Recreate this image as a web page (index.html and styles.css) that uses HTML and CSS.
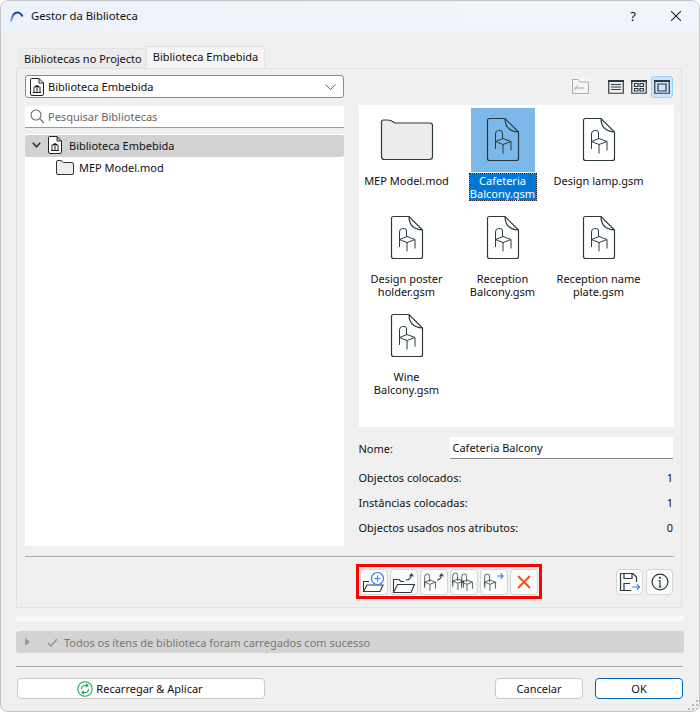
FILE: index.html
```html
<!DOCTYPE html>
<html lang="pt">
<head>
    <meta charset="UTF-8">
    <meta name="viewport" content="width=device-width, initial-scale=1.0">
    <title>Gestor da Biblioteca</title>
    <link rel="stylesheet" href="styles.css">
</head>
<body>
    <svg class="defs" width="0" height="0">
        <defs>
            <linearGradient id="arc" x1="0" y1="1" x2="1" y2="0">
                <stop offset="0" stop-color="#8fb0f0"/>
                <stop offset=".6" stop-color="#1f3fa8"/>
                <stop offset="1" stop-color="#2a4fc0"/>
            </linearGradient>
        </defs>
        <symbol id="chair" viewBox="0 0 20 26">
            <path d="M1 21V5.500Q1 1 4 1H5.500Q8 1 8 4V12M1 12.500L8.500 9.500L16.500 12.500L8.500 15.500ZM8.500 15.500V25M16.500 12.500V22M1 12.500V18" fill="none" stroke="currentColor" stroke-width="1.100"/>
        </symbol>
        <symbol id="doc" viewBox="0 0 64 64">
            <path d="M18.500 10.500H34L47.500 24V50.500Q47.500 52.500 45.500 52.500H18.500Q16.500 52.500 16.500 50.500V12.500Q16.500 10.500 18.500 10.500ZM34 10.500Q34 23 47.500 24" fill="none" stroke="#2b3a42" stroke-width="1.200"/>
            <path d="M24.500 41V26Q24.500 22.500 27.500 22.500H29Q31.500 22.500 31.500 25V31M24.500 33.500L32 30.500L40 33.500L32 36.500ZM32 36.500V45.500M40 33.500V42.500" fill="none" stroke="#2b3a42" stroke-width="1"/>
        </symbol>
        <symbol id="libdoc" viewBox="0 0 14 18">
            <path d="M1.500 .500H9L13.500 5V16Q13.500 17.500 12 17.500H2Q.500 17.500 .500 16V2Q.500 .500 1.500 .500ZM9 .500V5H13.500" fill="#fff" stroke="#222" stroke-width="1"/>
            <path d="M2.500 9.500L7 7L11.500 9.500Z" fill="#222"/>
            <path d="M4 10V14M7 10V14M10 10V14M3 14.500H11" fill="none" stroke="#222" stroke-width="1"/>
        </symbol>
        <symbol id="openfolder" viewBox="0 0 24 20">
            <path d="M1.500 18.500V5.500H7L9 7.500H12M1.500 18.500L5.500 10.500H22.500L19 18.500Z" fill="none" stroke="#2b3a42" stroke-width="1.100"/>
        </symbol>
    </svg>

    <div class="window">
        <header class="titlebar">
            <svg class="app-logo" width="16" height="13" viewBox="0 0 16 13"><path d="M2 11.500Q3.500 3 8 2.500Q11.500 2.300 13.500 6.500" fill="none" stroke="url(#arc)" stroke-width="2"/></svg>
            <span class="title">Gestor da Biblioteca</span>
            <span class="title-help">?</span>
            <svg class="title-close" width="10" height="10" viewBox="0 0 10 10"><path d="M0 0L10 10M10 0L0 10" stroke="#222" stroke-width="1.100"/></svg>
        </header>

        <nav class="tabs">
            <div class="tab">Bibliotecas no Projecto</div>
            <div class="tab active">Biblioteca Embebida</div>
        </nav>

        <main class="panel">
            <div class="columns">
                <section class="left-col">
                    <div class="dropdown">
                        <svg class="lib-icon" width="14" height="18"><use href="#libdoc"/></svg>
                        <span>Biblioteca Embebida</span>
                        <svg class="chevron" width="11" height="6" viewBox="0 0 11 6"><path d="M.500 .500L5.500 5.500L10.500 .500" fill="none" stroke="#666" stroke-width="1"/></svg>
                    </div>
                    <div class="search">
                        <svg width="15" height="15" viewBox="0 0 15 15"><circle cx="6" cy="6" r="5" fill="none" stroke="#666" stroke-width="1.100"/><path d="M9.700 9.700L14 14" stroke="#666" stroke-width="1.100"/></svg>
                        <span>Pesquisar Bibliotecas</span>
                    </div>
                    <div class="tree">
                        <div class="tree-row selected">
                            <svg class="tree-arrow" width="9" height="6" viewBox="0 0 9 6"><path d="M.800 .800L4.500 4.800L8.200 .800" fill="none" stroke="#333" stroke-width="1.600"/></svg>
                            <svg width="14" height="18"><use href="#libdoc"/></svg>
                            <span>Biblioteca Embebida</span>
                        </div>
                        <div class="tree-row child">
                            <svg width="18" height="15" viewBox="0 0 18 15"><path d="M.500 2Q.500 .500 2 .500H5L7.500 2.500H16Q17.500 2.500 17.500 4V13Q17.500 14.500 16 14.500H2Q.500 14.500 .500 13Z" fill="#eee" stroke="#333" stroke-width="1"/></svg>
                            <span>MEP Model.mod</span>
                        </div>
                    </div>
                </section>

                <section class="right-col">
                    <div class="view-bar">
                        <button class="up-btn">
                            <svg width="17" height="15" viewBox="0 0 17 15"><path d="M.500 14.500V.500H6L8 3H16.500V14.500ZM3 9H12M3 9L6 6.500M3 9V11" fill="none" stroke="#aaa" stroke-width="1"/></svg>
                        </button>
                        <svg class="view-icon" width="16" height="14" viewBox="0 0 16 14"><path d="M.750 .750H15.250V13.250H.750ZM3 4.500H13M3 7H13M3 9.500H13" fill="none" stroke="#2b3a42" stroke-width="1.200"/><path d="M0 0H16V2H0Z" fill="#2b3a42"/></svg>
                        <svg class="view-icon" width="16" height="14" viewBox="0 0 16 14"><path d="M.750 .750H15.250V13.250H.750ZM3.500 3.500H7V6.500H3.500ZM9 3.500H12.500V6.500H9ZM3.500 8.500H7V11H3.500ZM9 8.500H12.500V11H9Z" fill="none" stroke="#2b3a42" stroke-width="1.200"/><path d="M0 0H16V2H0Z" fill="#2b3a42"/></svg>
                        <div class="view-active">
                            <svg width="16" height="14" viewBox="0 0 16 14"><path d="M.750 .750H15.250V13.250H.750ZM4 4H12V11H4Z" fill="none" stroke="#2b3a42" stroke-width="1.200"/><path d="M0 0H16V2H0Z" fill="#2b3a42"/></svg>
                        </div>
                    </div>

                    <div class="file-grid">
                        <div class="file">
                            <div class="file-thumb">
                                <svg width="64" height="64" viewBox="0 0 64 64"><path d="M6.500 14Q6.500 12 8.500 12H13Q16 12 20 15H55Q57.500 15 57.500 17.500V48.500Q57.500 51.500 54.500 51.500H9.500Q6.500 51.500 6.500 48.500Z" fill="#ececec" stroke="#2b3a42" stroke-width="1.200"/></svg>
                            </div>
                            <div class="file-name">MEP Model.mod</div>
                        </div>
                        <div class="file selected">
                            <div class="file-thumb"><svg width="64" height="64"><use href="#doc"/></svg></div>
                            <div class="file-name">Cafeteria Balcony.gsm</div>
                        </div>
                        <div class="file">
                            <div class="file-thumb"><svg width="64" height="64"><use href="#doc"/></svg></div>
                            <div class="file-name">Design lamp.gsm</div>
                        </div>
                        <div class="file">
                            <div class="file-thumb"><svg width="64" height="64"><use href="#doc"/></svg></div>
                            <div class="file-name">Design poster holder.gsm</div>
                        </div>
                        <div class="file">
                            <div class="file-thumb"><svg width="64" height="64"><use href="#doc"/></svg></div>
                            <div class="file-name">Reception Balcony.gsm</div>
                        </div>
                        <div class="file">
                            <div class="file-thumb"><svg width="64" height="64"><use href="#doc"/></svg></div>
                            <div class="file-name">Reception name plate.gsm</div>
                        </div>
                        <div class="file">
                            <div class="file-thumb"><svg width="64" height="64"><use href="#doc"/></svg></div>
                            <div class="file-name">Wine Balcony.gsm</div>
                        </div>
                    </div>

                    <div class="name-row">
                        <span>Nome:</span>
                        <div class="name-input">Cafeteria Balcony</div>
                    </div>
                    <div class="stat-row"><span>Objectos colocados:</span><span>1</span></div>
                    <div class="stat-row"><span>Instâncias colocadas:</span><span>1</span></div>
                    <div class="stat-row"><span>Objectos usados nos atributos:</span><span>0</span></div>
                </section>
            </div>

            <hr class="rule">

            <div class="actions">
                <div class="action-group">
                    <button class="icon-btn">
                        <svg width="24" height="22" viewBox="0 0 24 22"><path d="M1.500 20.500V10.500H7M1.500 20.500L5 14H21L18 20.500Z" fill="none" stroke="#2b3a42" stroke-width="1.100"/><circle cx="15.500" cy="7.500" r="6" fill="#fff" stroke="#3a82f0" stroke-width="1.200"/><path d="M15.500 4.500V10.500M12.500 7.500H18.500" stroke="#3a82f0" stroke-width="1.200"/></svg>
                    </button>
                    <button class="icon-btn">
                        <svg width="24" height="22" viewBox="0 0 24 22"><use href="#openfolder" y="2"/><path d="M14 9Q19 9 19.500 3.500M17.500 5.500L19.500 3L21.500 5.500" fill="none" stroke="#2b3a42" stroke-width="1.100"/></svg>
                    </button>
                    <button class="icon-btn">
                        <svg width="24" height="22" viewBox="0 0 24 22"><use class="ink" href="#chair" x="2" y="2" width="14" height="19"/><path d="M15 9Q19 9 19.500 3.500M17.500 5.500L19.500 3L21.500 5.500" fill="none" stroke="#2b3a42" stroke-width="1.100"/></svg>
                    </button>
                    <button class="icon-btn">
                        <svg width="24" height="22" viewBox="0 0 24 22"><use class="ink" href="#chair" x="0" y="1" width="14" height="19"/><use class="ink" href="#chair" x="9" y="2" width="14" height="19"/></svg>
                    </button>
                    <button class="icon-btn">
                        <svg width="24" height="22" viewBox="0 0 24 22"><use class="ink" href="#chair" x="2" y="2" width="14" height="19"/><path d="M15 5H21M18.500 2.500L21 5L18.500 7.500" fill="none" stroke="#3a82f0" stroke-width="1.200"/></svg>
                    </button>
                    <button class="icon-btn">
                        <svg width="14" height="14" viewBox="0 0 14 14"><path d="M1 1L13 13M13 1L1 13" stroke="#f4511e" stroke-width="2"/></svg>
                    </button>
                </div>
                <div class="side-group">
                    <button class="icon-btn">
                        <svg width="22" height="20" viewBox="0 0 22 20"><path d="M12 18.500H1.500V1.500H14L17.500 5V10M5 1.500V6.500H13V1.500M5 18.500V11.500H11" fill="none" stroke="#2b3a42" stroke-width="1.200"/><path d="M13 15H20.500M18 12.500L20.500 15L18 17.500" fill="none" stroke="#3a82f0" stroke-width="1.200"/></svg>
                    </button>
                    <button class="icon-btn">
                        <svg width="18" height="18" viewBox="0 0 18 18"><circle cx="9" cy="9" r="7.900" fill="none" stroke="#2b3a42" stroke-width="1.200"/><path d="M9 7.500V14M7.500 7.500H9M7.500 14H10.500" fill="none" stroke="#2b3a42" stroke-width="1.200"/><circle cx="9" cy="4.800" r="1.100" fill="#2b3a42"/></svg>
                    </button>
                </div>
            </div>
        </main>

        <div class="band"></div>

        <div class="message-bar">
            <svg class="msg-arrow" width="5" height="8" viewBox="0 0 5 8"><path d="M0 0L5 4L0 8Z" fill="#999"/></svg>
            <svg class="msg-check" width="11" height="9" viewBox="0 0 11 9"><path d="M1 5L4 8L10 1" fill="none" stroke="#999" stroke-width="1.700"/></svg>
            <span>Todos os ítens de biblioteca foram carregados com sucesso</span>
        </div>

        <hr class="rule bottom-rule">

        <footer class="footer">
            <button class="btn reload">
                <svg width="16" height="16" viewBox="0 0 16 16"><circle cx="8" cy="8" r="7.200" fill="none" stroke="#1fa35c" stroke-width="1.100"/><path d="M4.500 8Q4.500 4.500 8 4.500H10.500M9 3L11 4.500L9 6M11.500 8Q11.500 11.500 8 11.500H5.500M7 10L5 11.500L7 13" fill="none" stroke="#1fa35c" stroke-width="1.100"/></svg>
                Recarregar &amp; Aplicar
            </button>
            <div class="footer-right">
                <button class="btn small">Cancelar</button>
                <button class="btn small primary">OK</button>
            </div>
        </footer>

        <svg class="grip" width="10" height="10" viewBox="0 0 10 10"><path d="M8 0h2v2H8zM4 4h2v2H4zM8 4h2v2H8zM0 8h2v2H0zM4 8h2v2H4zM8 8h2v2H8z" fill="#bbb"/></svg>
    </div>
</body>
</html>
```

FILE: styles.css
```css
* {
    margin: 0;
    padding: 0;
    box-sizing: border-box;
    font-family: "Noto Sans", Arial, sans-serif;
}
body {
    background: #fff;
    color: #111;
    font-size: 11px;
    line-height: 13px;
}
button {
    font-size: 11px;
    color: #111;
}
.defs {
    position: absolute;
}
.ink {
    color: #2b3a42;
}
.window {
    position: relative;
    width: 700px;
    height: 712px;
    background: #f0f0f0;
    border: 1px solid #c4c4c4;
    border-radius: 8px;
    overflow: hidden;
}
.titlebar {
    display: flex;
    align-items: center;
    height: 30px;
    padding-left: 8px;
    background: linear-gradient(90deg, #edf2fa, #f1f5fb);
}
.title {
    margin-left: 6px;
    margin-bottom: 2px;
    font-size: 11.3px;
    flex: 1;
}
.title-help {
    font-size: 13px;
    margin-right: 35px;
}
.title-close {
    margin-right: 18px;
}

/* tabs */
.tabs {
    display: flex;
    align-items: flex-end;
    height: 37px;
    padding-left: 18px;
}
.tab {
    height: 20px;
    padding: 3px 3px 0 4px;
    background: #ececec;
    border: 1px solid #e4e4e4;
    border-bottom: none;
    white-space: nowrap;
}
.tab.active {
    height: 22px;
    padding: 3px 6px 0;
    background: #f5f5f5;
}

/* main panel */
.panel {
    width: 666px;
    height: 540px;
    margin-left: 15px;
    padding: 6px 7px 0 8px;
    border: 1px solid #e2e2e2;
}
.columns {
    display: flex;
    gap: 15px;
    height: 471px;
}
.left-col {
    width: 319px;
    display: flex;
    flex-direction: column;
}
.dropdown {
    display: flex;
    align-items: center;
    gap: 4px;
    height: 23px;
    padding: 0 4px;
    background: #fff;
    border: 1px solid #8a8a8a;
    border-radius: 3px;
}
.chevron {
    margin-left: auto;
    margin-right: 3px;
}
.search {
    display: flex;
    align-items: center;
    gap: 3px;
    height: 22px;
    margin-top: 8px;
    padding: 0 5px;
    background: #fff;
    border-bottom: 1px solid #999;
    color: #666;
}
.tree {
    flex: 1;
    margin-top: 6px;
    background: #fff;
}
.tree-row {
    display: flex;
    align-items: center;
    height: 22px;
    padding-bottom: 2px;
}
.tree-row.selected {
    margin-top: 1px;
    padding-left: 7px;
    gap: 7px;
    background: #d2d2d2;
    border-radius: 2px;
}
.tree-row.child {
    padding-left: 31px;
    gap: 5px;
}
.right-col {
    width: 316px;
    display: flex;
    flex-direction: column;
}
.view-bar {
    display: flex;
    align-items: center;
    height: 23px;
    padding-right: 1px;
}
.up-btn {
    display: flex;
    align-items: center;
    justify-content: center;
    width: 19px;
    height: 19px;
    margin-left: auto;
    margin-right: 18px;
    background: #f5f5f5;
    border: none;
    border-radius: 2px;
}
.view-icon {
    margin-right: 7px;
}
.view-active {
    display: flex;
    align-items: center;
    justify-content: center;
    width: 22px;
    height: 22px;
    margin-left: -3px;
    background: #cce4ff;
    border: 1px solid #99d0ff;
    border-radius: 3px;
}

/* file icons */
.file-grid {
    display: grid;
    grid-template-columns: repeat(3, 96px);
    grid-auto-rows: 98px;
    height: 322px;
    margin-top: 7px;
    background: #fff;
    padding-top: 3px;
}
.file {
    display: flex;
    flex-direction: column;
    align-items: center;
}
.file-thumb {
    width: 64px;
    height: 64px;
    flex: none;
}
.file-name {
    margin-top: 2px;
    width: 92px;
    text-align: center;
}
.file.selected .file-thumb {
    background: #7cb9ea;
}
.file.selected .file-name {
    width: 66px;
    background: #0078d7;
    color: #fff;
    outline: 1px dotted #222;
    box-shadow: 0 0 0 1px #e08a00;
}

/* properties */
.name-row {
    display: flex;
    align-items: center;
    height: 22px;
    margin-top: 10px;
}
.name-row span {
    width: 91px;
}
.name-input {
    flex: 1;
    height: 22px;
    margin-right: 1px;
    padding: 4px 3px;
    background: #fff;
    border-bottom: 1px solid #888;
}
.stat-row {
    display: flex;
    justify-content: space-between;
    height: 25px;
    align-items: center;
    padding-right: 1px;
}
.name-row + .stat-row {
    margin-top: 6px;
}

.rule {
    height: 1px;
    border: none;
    background: #a9a9a9;
}
.panel > .rule {
    margin: 10px 0 0;
}
.actions {
    display: flex;
    margin-top: 7px;
    padding-left: 331px;
}
.action-group {
    display: flex;
    gap: 2px;
    padding: 2px 1px 1px;
    border: 3px solid #f00;
}
.side-group {
    display: flex;
    gap: 3px;
    margin-left: 74px;
    margin-top: 5px;
}
.icon-btn {
    display: flex;
    align-items: center;
    justify-content: center;
    width: 28px;
    height: 26px;
    background: #fbfbfb;
    border: 1px solid #d5d5d5;
    border-radius: 4px;
}
.side-group .icon-btn {
    width: 27px;
}

.band {
    height: 5px;
    width: 668px;
    margin: 8px 0 0 15px;
    background: #f8f8f8;
}
.message-bar {
    display: flex;
    align-items: center;
    width: 668px;
    height: 22px;
    margin: 10px 0 0 15px;
    padding-left: 9px;
    background: #d4d4d4;
    border-radius: 3px;
    color: #777;
}
.msg-check {
    margin-left: 17px;
    margin-right: 6px;
}
.bottom-rule {
    width: 667px;
    margin: 13px 0 0 15px;
}

/* footer */
.footer {
    display: flex;
    justify-content: space-between;
    width: 666px;
    margin: 11px 0 0 16px;
}
.footer-right {
    display: flex;
    gap: 12px;
}
.btn {
    display: flex;
    align-items: center;
    justify-content: center;
    gap: 3px;
    height: 21px;
    background: #fff;
    border: 1px solid #c8c8c8;
    border-radius: 4px;
}
.reload {
    width: 248px;
    padding-right: 2px;
}
.small {
    width: 88px;
}
.primary {
    border-color: #0067c0;
}
.grip {
    position: absolute;
    right: 1px;
    bottom: 1px;
}
```
